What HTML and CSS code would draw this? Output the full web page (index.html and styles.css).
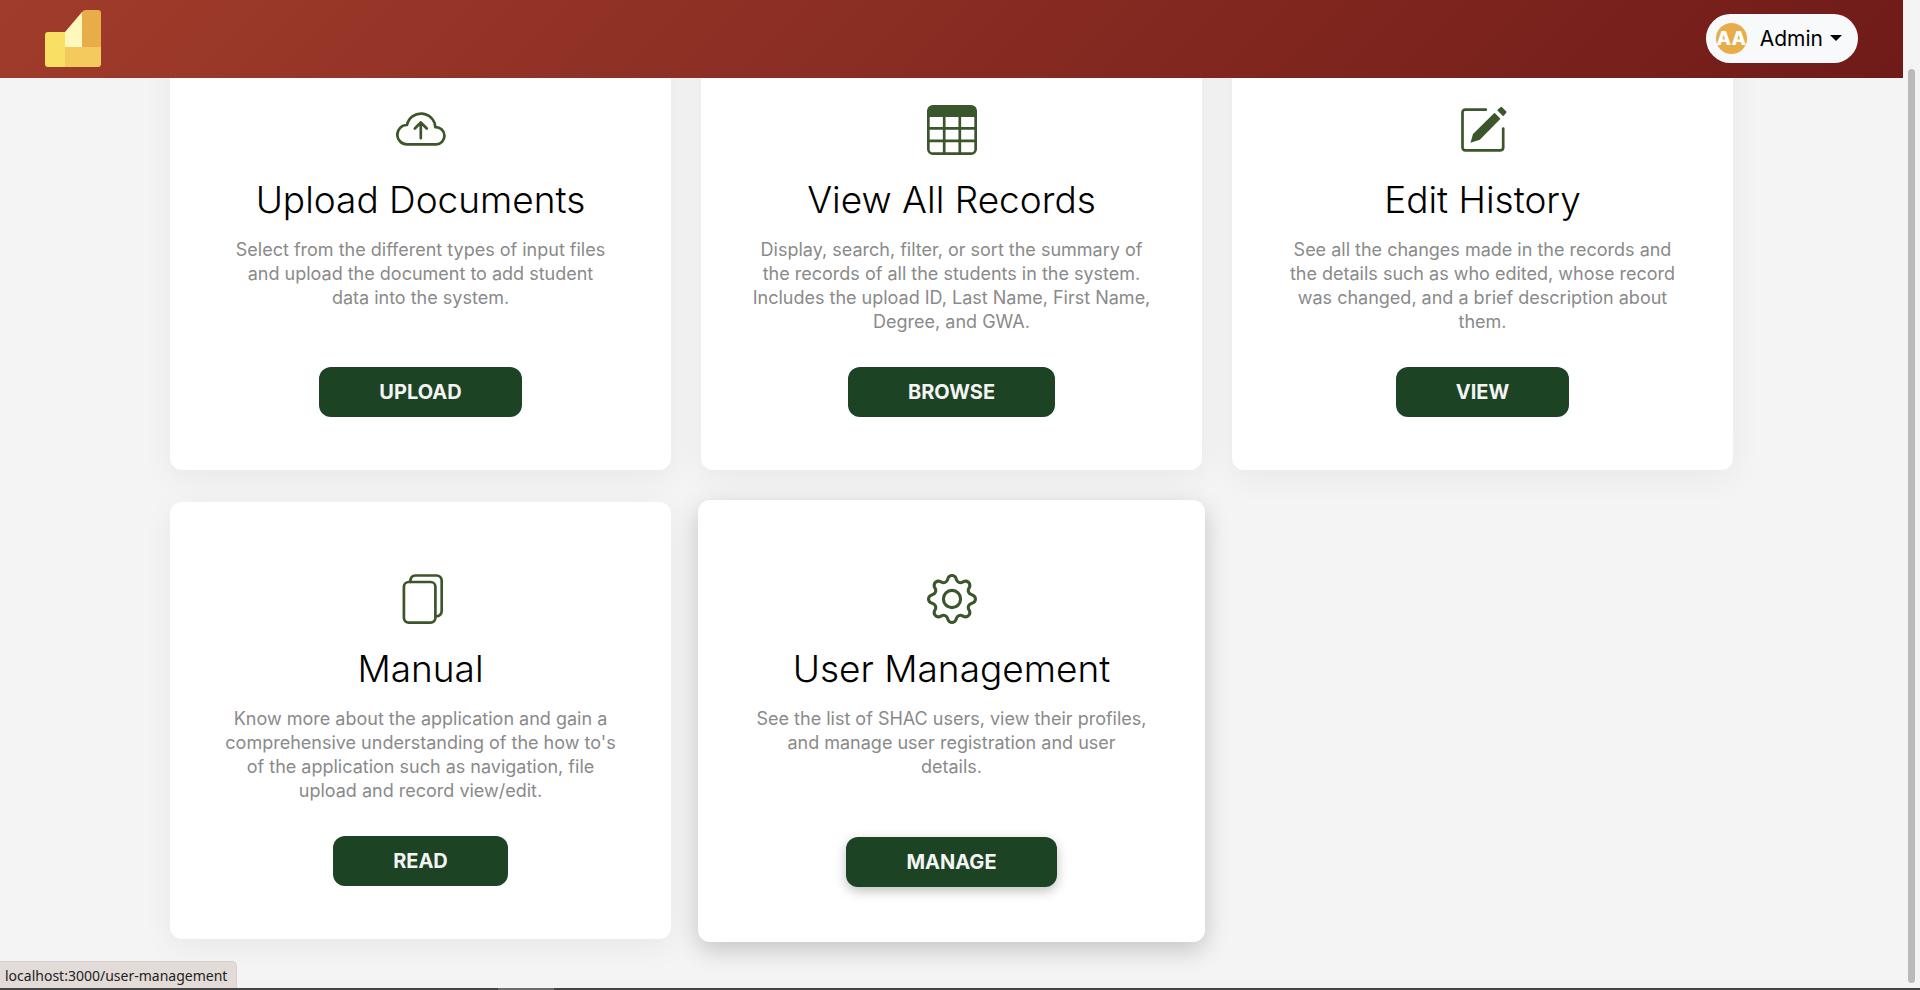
FILE: index.html
```html
<!DOCTYPE html>
<html lang="en">
<head>
<meta charset="utf-8">
<title>Dashboard</title>
<link rel="stylesheet" href="styles.css">
</head>
<body>
<header class="topbar">
  <a class="logo" href="#" aria-label="Home">
    <svg width="56" height="57" viewBox="0 0 56 57" aria-hidden="true">
      <path d="M3 22H20V57H3a3 3 0 0 1-3-3V25a3 3 0 0 1 3-3z" fill="#fadf65"/>
      <path d="M20 22 37 2V37H20z" fill="#fff8bd"/>
      <path d="M37 2Q38.500 0 40.500 0H53a3 3 0 0 1 3 3V37H37z" fill="#e8ad49"/>
      <path d="M20 37H56V54a3 3 0 0 1-3 3H20z" fill="#f4ca5f"/>
    </svg>
  </a>
  <button class="account" type="button" aria-haspopup="true">
    <span class="avatar">AA</span>
    <span class="account-name">Admin</span>
    <span class="caret"></span>
  </button>
</header>

<main class="content">
  <section class="card">
    <svg class="icon" viewBox="0 0 50 50" aria-hidden="true">
      <path class="line" d="M11 20A14.300 14.300 0 0 1 39.300 22.200M11 20A9.700 9.700 0 0 0 11 39.400H40.300A8.600 8.600 0 0 0 39.300 22.200"/>
      <path class="line" d="M24.800 33.200V17.500M18.800 23.500L24.800 17.500L30.800 23.500"/>
    </svg>
    <h2>Upload Documents</h2>
    <p>Select from the different types of input files<br>and upload the document to add student<br>data into the system.</p>
    <a class="btn" href="#upload">UPLOAD</a>
  </section>

  <section class="card">
    <svg class="icon" viewBox="0 0 50 50" aria-hidden="true">
      <rect class="line" x="1.350" y="1.350" width="47.300" height="47.300" rx="4.500"/>
      <path d="M1 12V5a4 4 0 0 1 4-4H45a4 4 0 0 1 4 4V12z"/>
      <path class="line" d="M1 23.300H49M1 35.800H49M17.200 12V49M32.800 12V49"/>
    </svg>
    <h2>View All Records</h2>
    <p>Display, search, filter, or sort the summary of<br>the records of all the students in the system.<br>Includes the upload ID, Last Name, First Name,<br>Degree, and GWA.</p>
    <a class="btn" href="#records">BROWSE</a>
  </section>

  <section class="card">
    <svg class="icon" viewBox="0 0 50 50" aria-hidden="true">
      <path class="line" d="M27.800 4.700H7.200A2.700 2.700 0 0 0 4.500 7.400V42.600A2.700 2.700 0 0 0 7.200 45.300H42.500A2.700 2.700 0 0 0 45.200 42.600V23.500"/>
      <path d="M36.500 7.700 42.500 13.700 21.800 34.700 12.500 37.700 15 29z"/>
      <path d="M42.400 2.200Q43.200 1.400 44 2.200L48.100 6.300Q48.900 7.100 48.100 8L45.200 11.200 39.200 5.300z"/>
    </svg>
    <h2>Edit History</h2>
    <p>See all the changes made in the records and<br>the details such as who edited, whose record<br>was changed, and a brief description about<br>them.</p>
    <a class="btn" href="#history">VIEW</a>
  </section>

  <section class="card">
    <svg class="icon" viewBox="0 0 50 50" aria-hidden="true">
      <rect class="line" x="7.900" y="8" width="31.500" height="40.600" rx="4.800"/>
      <path class="line" d="M14.300 8C14.300 4 16 1.500 19.500 1.500H40.500A5 5 0 0 1 45.700 6.500V37A5.200 5.200 0 0 1 39.800 42.200"/>
    </svg>
    <h2>Manual</h2>
    <p>Know more about the application and gain a<br>comprehensive understanding of the how to's<br>of the application such as navigation, file<br>upload and record view/edit.</p>
    <a class="btn" href="#manual">READ</a>
  </section>

  <section class="card card-active">
    <svg class="icon" viewBox="0 0 16 16" aria-hidden="true">
      <path d="M8 4.754a3.246 3.246 0 1 0 0 6.492 3.246 3.246 0 0 0 0-6.492zM5.754 8a2.246 2.246 0 1 1 4.492 0 2.246 2.246 0 0 1-4.492 0z"/>
      <path d="M9.796 1.343c-.527-1.790-3.065-1.790-3.592 0l-.094.319a.873.873 0 0 1-1.255.520l-.292-.160c-1.640-.892-3.433.902-2.540 2.541l.159.292a.873.873 0 0 1-.520 1.255l-.319.094c-1.790.527-1.790 3.065 0 3.592l.319.094a.873.873 0 0 1 .520 1.255l-.160.292c-.892 1.640.901 3.434 2.541 2.540l.292-.159a.873.873 0 0 1 1.255.520l.094.319c.527 1.790 3.065 1.790 3.592 0l.094-.319a.873.873 0 0 1 1.255-.520l.292.160c1.640.893 3.434-.902 2.540-2.541l-.159-.292a.873.873 0 0 1 .520-1.255l.319-.094c1.790-.527 1.790-3.065 0-3.592l-.319-.094a.873.873 0 0 1-.520-1.255l.160-.292c.893-1.640-.902-3.433-2.541-2.540l-.292.159a.873.873 0 0 1-1.255-.520l-.094-.319zm-2.633.283c.246-.835 1.428-.835 1.674 0l.094.319a1.873 1.873 0 0 0 2.693 1.115l.291-.160c.764-.415 1.600.420 1.184 1.185l-.159.292a1.873 1.873 0 0 0 1.116 2.692l.318.094c.835.246.835 1.428 0 1.674l-.319.094a1.873 1.873 0 0 0-1.115 2.693l.160.291c.415.764-.420 1.600-1.185 1.184l-.291-.159a1.873 1.873 0 0 0-2.693 1.116l-.094.318c-.246.835-1.428.835-1.674 0l-.094-.319a1.873 1.873 0 0 0-2.692-1.115l-.292.160c-.764.415-1.600-.420-1.184-1.185l.159-.291A1.873 1.873 0 0 0 1.945 8.930l-.319-.094c-.835-.246-.835-1.428 0-1.674l.319-.094A1.873 1.873 0 0 0 3.060 4.377l-.160-.292c-.415-.764.420-1.600 1.185-1.184l.292.159a1.873 1.873 0 0 0 2.692-1.115l.094-.319z"/>
    </svg>
    <h2>User Management</h2>
    <p>See the list of SHAC users, view their profiles,<br>and manage user registration and user<br>details.</p>
    <a class="btn" href="#user-management">MANAGE</a>
  </section>
</main>

<div class="scroll-thumb"></div>
<div class="link-status">localhost:3000/user-management</div>
<div class="window-edge"><span class="window-edge-tab"></span></div>
</body>
</html>
```
FILE: styles.css
```css
* { box-sizing: border-box; }

body {
  margin: 0;
  height: 100vh;
  overflow: hidden;
  padding-right: 17px;
  background: #f4f4f4;
  color: #000;
  font-family: Inter, "Open Sans", sans-serif;
}

.topbar {
  position: relative;
  z-index: 2;
  display: flex;
  align-items: center;
  justify-content: space-between;
  height: 78px;
  padding: 0 45px 2px;
  background: linear-gradient(135deg, #a03c2b, #701b19);
}

.logo { display: flex; }

.account {
  display: flex;
  align-items: center;
  height: 49px;
  padding: 0 16px 0 10px;
  border: 0;
  border-radius: 25px;
  background: #f8f9fa;
  color: #000;
  font-family: inherit;
  font-size: 21px;
}

.avatar {
  display: flex;
  align-items: center;
  justify-content: center;
  width: 31px;
  height: 31px;
  margin-right: 13px;
  border-radius: 50%;
  background: #e8ad49;
  color: #fff;
  font-size: 19px;
  font-weight: 800;
}

.caret {
  margin-left: 7px;
  border: 6px solid transparent;
  border-top-color: #000;
  border-bottom: 0;
}

.content {
  display: grid;
  grid-template-columns: repeat(3, 1fr);
  gap: 32px 30px;
  margin-top: -45px;
  padding: 0 170px;
}

.card {
  display: flex;
  flex-direction: column;
  align-items: center;
  padding: 72px 24px 53px;
  border-radius: 12px;
  background: #fff;
  box-shadow: 0 8px 32px rgba(0, 0, 0, 0.05);
  text-align: center;
}

.card-active {
  margin: -2px -3px -3px;
  padding: 74px 24px 55px;
  box-shadow: 0 8px 24px rgba(0, 0, 0, 0.2);
}

.icon {
  width: 50px;
  height: 50px;
  fill: #3c562c;
}

.icon .line {
  fill: none;
  stroke: #3c562c;
  stroke-width: 2.7px;
  stroke-linecap: round;
  stroke-linejoin: round;
}

.card h2 {
  margin: 23px 0 16px;
  font-size: 37px;
  font-weight: 300;
  line-height: 44px;
}

.card p {
  flex: 1;
  min-height: 96px;
  margin: 0 0 33px;
  color: #8a8a8a;
  font-size: 18px;
  line-height: 24px;
  white-space: nowrap;
}

.btn {
  padding: 0 60px;
  border-radius: 12px;
  background: #1c4424;
  color: #f4f4f4;
  font-size: 20px;
  font-weight: 700;
  line-height: 50px;
  text-decoration: none;
}

.card-active .btn { box-shadow: 0 4px 12px rgba(0, 0, 0, 0.25); }

.scroll-thumb {
  position: absolute;
  z-index: 3;
  top: 69px;
  right: 5px;
  bottom: 7px;
  width: 7px;
  border-radius: 4px;
  background: #bababc;
}

.link-status {
  position: absolute;
  z-index: 3;
  left: 0;
  bottom: 2px;
  padding: 2px 9px 0 5px;
  border: 1px solid #d8d0ce;
  border-width: 1px 1px 0 0;
  border-radius: 0 5px 0 0;
  background: #e3dbd8;
  color: #222;
  font-family: "Noto Sans", sans-serif;
  font-size: 14px;
  line-height: 24px;
}

.window-edge {
  position: absolute;
  z-index: 3;
  left: 0;
  right: 0;
  bottom: 0;
  display: flex;
  height: 2px;
  padding-left: 498px;
  background: #444;
}

.window-edge-tab {
  width: 56px;
  background: #6c6c6a;
}
```
